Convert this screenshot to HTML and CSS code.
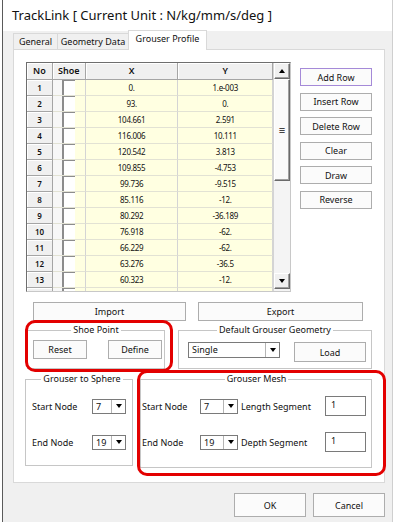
FILE: index.html
```html
<!DOCTYPE html>
<html lang="en">
<head>
    <meta charset="UTF-8">
    <title>TrackLink</title>
    <link rel="stylesheet" href="styles.css">
</head>
<body>
<div class="window">
    <div class="titlebar">TrackLink [ Current Unit : N/kg/mm/s/deg ]</div>

    <div class="tabs">
        <div class="tab tab-general">General</div>
        <div class="tab tab-geometry">Geometry Data</div>
        <div class="tab tab-active">Grouser Profile</div>
    </div>

    <div class="panel">
        <div class="top-row">
            <div class="grid">
                <div class="grid-body" id="gridBody">
                    <div class="grid-row grid-head">
                        <div class="cell col-no head">No</div>
                        <div class="cell col-shoe head">Shoe</div>
                        <div class="cell col-x head">X</div>
                        <div class="cell col-y head">Y</div>
                    </div>
                    <!-- rows are filled in by the script below -->
                </div>
                <div class="scrollbar">
                    <div class="sb-btn"><span class="arrow-up"></span></div>
                    <div class="sb-thumb">&#8801;</div>
                    <div class="sb-btn sb-down"><span class="arrow-down"></span></div>
                </div>
            </div>

            <div class="side-buttons">
                <button class="btn btn-focus">Add Row</button>
                <button class="btn">Insert Row</button>
                <button class="btn">Delete Row</button>
                <button class="btn">Clear</button>
                <button class="btn">Draw</button>
                <button class="btn">Reverse</button>
            </div>
        </div>

        <div class="io-row">
            <button class="btn btn-import">Import</button>
            <button class="btn btn-export">Export</button>
        </div>

        <div class="group-row first">
            <fieldset class="group shoe-point">
                <legend>Shoe Point</legend>
                <div class="group-inner">
                    <button class="btn btn-small">Reset</button>
                    <button class="btn btn-small">Define</button>
                </div>
            </fieldset>
            <fieldset class="group default-geometry">
                <legend>Default Grouser Geometry</legend>
                <div class="group-inner">
                    <div class="combo combo-wide"><span class="combo-text">Single</span><span class="combo-arrow"><span class="arrow-down"></span></span></div>
                    <button class="btn btn-load">Load</button>
                </div>
            </fieldset>
        </div>

        <div class="group-row second">
            <fieldset class="group sphere">
                <legend>Grouser to Sphere</legend>
                <div class="form-row">
                    <span class="label">Start Node</span>
                    <div class="combo combo-node"><span class="combo-text">7</span><span class="combo-arrow"><span class="arrow-down"></span></span></div>
                </div>
                <div class="form-row">
                    <span class="label">End Node</span>
                    <div class="combo combo-node"><span class="combo-text">19</span><span class="combo-arrow"><span class="arrow-down"></span></span></div>
                </div>
            </fieldset>
            <fieldset class="group mesh">
                <legend>Grouser Mesh</legend>
                <div class="form-row">
                    <span class="label">Start Node</span>
                    <div class="combo combo-mesh"><span class="combo-text">7</span><span class="combo-arrow"><span class="arrow-down"></span></span></div>
                    <span class="label label-seg">Length Segment</span>
                    <div class="textbox">1</div>
                </div>
                <div class="form-row">
                    <span class="label">End Node</span>
                    <div class="combo combo-mesh"><span class="combo-text">19</span><span class="combo-arrow"><span class="arrow-down"></span></span></div>
                    <span class="label label-seg">Depth Segment</span>
                    <div class="textbox">1</div>
                </div>
            </fieldset>
        </div>

        <!-- red annotation frames -->
        <div class="mark mark-shoe"></div>
        <div class="mark mark-mesh"></div>
    </div>

    <div class="footer">
        <button class="btn btn-dialog">OK</button>
        <button class="btn btn-dialog">Cancel</button>
    </div>
</div>

<script>
    // Profile points shown in the grid
    const points = [
        ["0.", "1.e-003"], ["93.", "0."], ["104.661", "2.591"], ["116.006", "10.111"],
        ["120.542", "3.813"], ["109.855", "-4.753"], ["99.736", "-9.515"], ["85.116", "-12."],
        ["80.292", "-36.189"], ["76.918", "-62."], ["66.229", "-62."], ["63.276", "-36.5"],
        ["60.323", "-12."], ["", ""]
    ];

    const gridBody = document.getElementById('gridBody');
    points.forEach((p, i) => {
        const row = document.createElement('div');
        row.className = 'grid-row';
        row.innerHTML =
            '<div class="cell col-no head">' + (i < 13 ? i + 1 : '') + '</div>' +
            '<div class="cell col-shoe"><span class="check"></span></div>' +
            '<div class="cell col-x">' + p[0] + '</div>' +
            '<div class="cell col-y">' + p[1] + '</div>';
        gridBody.appendChild(row);
    });
</script>
</body>
</html>
```

FILE: styles.css
```css
body {
    margin: 0;
    background-color: #fff;
    font-family: "Noto Sans", "Liberation Sans", sans-serif;
    color: #111;
}

.window {
    margin-left: 2px;
    width: 389px;
    height: 522px;
    background-color: #f0f0f0;
    border-left: 1px solid #5a5a5a;
    border-right: 1px solid #cfcfcf;
    overflow: hidden;
}

.titlebar {
    height: 31px;
    line-height: 30px;
    padding-left: 9px;
    font-size: 13px;
    background-color: #fff;
    white-space: nowrap;
}

/* tabs */
.tabs {
    display: flex;
    align-items: flex-end;
    height: 18px;
    margin-left: 10px;
    position: relative;
    z-index: 1;
}

.tab {
    height: 16px;
    line-height: 15px;
    box-sizing: border-box;
    border: 1px solid #d9d9d9;
    border-bottom: none;
    background-color: #f0f0f0;
    font-size: 9px;
    text-align: center;
    margin-right: -1px;
    white-space: nowrap;
}

.tab-general { width: 45px; }
.tab-geometry { width: 72px; }

.tab-active {
    width: 79px;
    height: 20px;
    line-height: 16px;
    background-color: #fff;
    margin-bottom: -1px;
}

/* main panel */
.panel {
    position: relative;
    box-sizing: border-box;
    width: 372px;
    height: 434px;
    margin-left: 10px;
    padding: 12px 0 0 12px;
    background-color: #fff;
    border: 1px solid #d9d9d9;
    font-size: 9px;
}

.top-row {
    display: flex;
    align-items: flex-start;
}

/* data grid */
.grid {
    display: flex;
    width: 265px;
    height: 230px;
    box-sizing: border-box;
    border: 1px solid #6e6e6e;
    border-right-color: #c8c8c8;
    border-bottom-color: #c8c8c8;
    overflow: hidden;
}

.grid-body {
    width: 247px;
    overflow: hidden;
}

.grid-row {
    display: flex;
    height: 16px;
}

.grid-head {
    height: 17px;
}

.cell {
    box-sizing: border-box;
    height: 100%;
    border-right: 1px solid #d4d4d4;
    border-bottom: 1px solid #e2e2d4;
    background-color: #ffffe1;
    text-align: center;
    font-size: 8px;
    line-height: 15px;
    letter-spacing: -0.3px;
}

.cell.head {
    background-color: #f0f0f0;
    border-right-color: #a5a5a5;
    border-bottom-color: #a5a5a5;
    box-shadow: inset 1px 1px 0 #fff;
    font-weight: 600;
    letter-spacing: 0;
}

.grid-head .cell {
    font-size: 9px;
    line-height: 16px;
}

.col-no { width: 26px; }
.col-shoe {
    width: 33px;
    background: linear-gradient(to right, #f7f7f7 9px, #ffffe1 9px);
}
.col-x { width: 93px; }
.col-y { width: 95px; }

.grid-head .col-shoe {
    background: #f0f0f0;
}

.check {
    display: block;
    margin-left: 9px;
    width: 13px;
    height: 15px;
    box-sizing: border-box;
    background-color: #fff;
    border-left: 2px solid #8c8c8c;
    border-top: 1px solid #8c8c8c;
}

.scrollbar {
    display: flex;
    flex-direction: column;
    width: 16px;
    background-color: #f4f4f4;
    border-left: 1px solid #d4d4d4;
}

.sb-btn,
.sb-thumb {
    box-sizing: border-box;
    background-color: #f0f0f0;
    border: 1px solid;
    border-color: #fff #6a6a6a #6a6a6a #fff;
    box-shadow: inset -1px -1px 0 #a0a0a0;
}

.sb-btn {
    height: 16px;
    display: flex;
    align-items: center;
    justify-content: center;
}

.sb-thumb {
    height: 102px;
    font-size: 11px;
    line-height: 100px;
    text-align: center;
    background-color: #fafafa;
}

.sb-down {
    margin-top: auto;
    margin-bottom: 2px;
}

.arrow-up,
.arrow-down {
    width: 0;
    height: 0;
    border-left: 3.5px solid transparent;
    border-right: 3.5px solid transparent;
}

.arrow-up { border-bottom: 4px solid #000; }
.arrow-down { border-top: 4px solid #000; }

/* buttons */
.btn {
    box-sizing: border-box;
    margin: 0;
    padding: 0;
    font-family: inherit;
    font-size: 9px;
    color: #111;
    background-color: #fbfbfb;
    border: 1px solid #adadad;
}

.side-buttons {
    display: flex;
    flex-direction: column;
    gap: 6.5px;
    margin-left: 9px;
    margin-top: 6px;
}

.side-buttons .btn {
    width: 72px;
    height: 18px;
}

.btn-focus {
    border-color: #a58ad8;
}

.io-row {
    display: flex;
    gap: 12px;
    margin-top: 10px;
    padding-left: 7px;
}

.io-row .btn { height: 19px; }
.btn-import { width: 153px; }
.btn-export { width: 165px; }

/* group boxes */
.group-row {
    display: flex;
    align-items: flex-start;
}

.group-row.first {
    margin-top: 3px;
    margin-left: 1px;
    gap: 13px;
}

.group-row.second {
    margin-top: 4px;
    margin-left: -1px;
    gap: 7px;
}

.group {
    box-sizing: border-box;
    margin: 0;
    padding: 0;
    min-width: 0;
    border: 1px solid #c6c6c6;
}

.group legend {
    margin: 0 auto;
    padding: 0 2px;
    font-size: 9px;
    line-height: 12px;
}

.group-inner {
    display: flex;
    align-items: flex-start;
}

.shoe-point { width: 138px; height: 45px; }
.shoe-point .group-inner { padding: 4px 0 0 5px; gap: 21px; }

.btn-small { width: 54px; height: 19px; }

.default-geometry { width: 194px; height: 45px; }
.default-geometry .group-inner { padding: 6px 0 0 9px; gap: 14px; }

.btn-load { width: 72px; height: 20px; }

.sphere { width: 108px; height: 93px; padding: 11px 0 0 6px; }
.mesh { width: 232px; height: 95px; padding: 11px 0 0 1px; }

.form-row {
    display: flex;
    align-items: center;
    height: 20px;
    margin-bottom: 16px;
}

.label {
    width: 60px;
    white-space: nowrap;
}

.mesh .label { width: 58px; }
.mesh .label-seg { width: 84px; margin-left: 3px; }

/* combo boxes and text boxes */
.combo {
    display: flex;
    box-sizing: border-box;
    height: 15px;
    background-color: #fff;
    border: 1px solid #7a7a7a;
}

.combo-text {
    flex: 1;
    padding-left: 3px;
    line-height: 13px;
}

.combo-arrow {
    width: 13px;
    border-left: 1px solid #b5b5b5;
    display: flex;
    align-items: center;
    justify-content: center;
}

.combo-node { width: 34px; }
.combo-mesh { width: 38px; }
.combo-wide { width: 92px; height: 16px; }
.combo-wide .combo-text { line-height: 14px; }

.textbox {
    box-sizing: border-box;
    width: 41px;
    height: 20px;
    padding: 1px 0 0 5px;
    background-color: #fff;
    border: 1px solid #7a7a7a;
}

/* red highlight frames drawn over the dialog */
.mark {
    position: absolute;
    border: 3px solid #e30000;
    border-radius: 10px;
    box-sizing: border-box;
}

.mark-shoe { left: 11px; top: 270px; width: 148px; height: 52px; }
.mark-mesh { left: 123px; top: 320px; width: 249px; height: 106px; }

/* dialog buttons */
.footer {
    display: flex;
    justify-content: flex-end;
    gap: 7px;
    margin-top: 10px;
    padding-right: 7px;
}

.btn-dialog {
    width: 72px;
    height: 24px;
}
```
